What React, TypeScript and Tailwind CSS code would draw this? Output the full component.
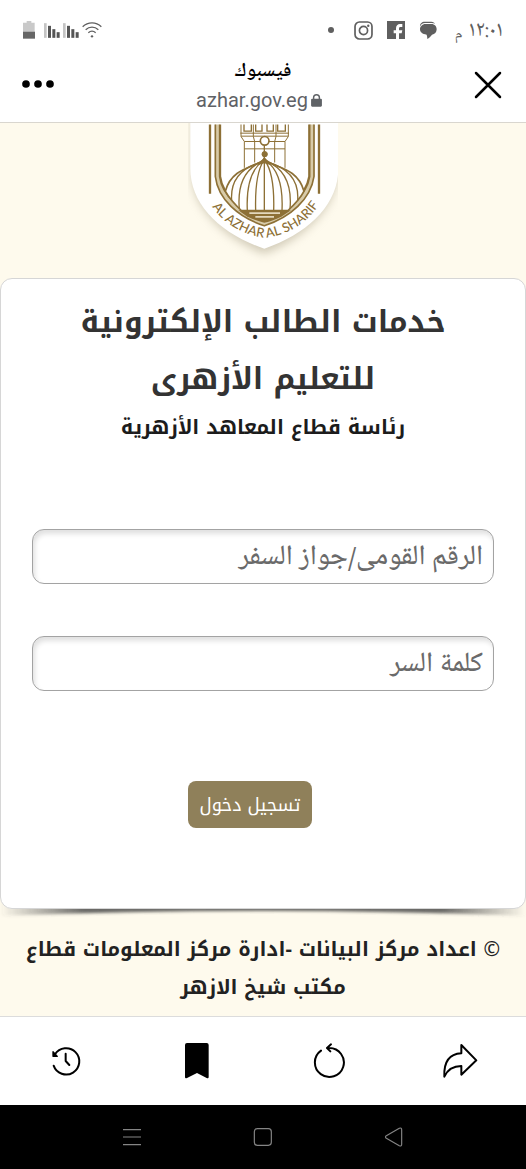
import React, { useState } from "react";

const SignalBars = () => (
  <svg viewBox="0 0 48 44" className="h-[15px] w-4" fill="#555" aria-hidden="true">
    <rect x="0" y="0" width="8" height="44" fill="#c4c4c4" />
    <rect x="12" y="8" width="9" height="36" />
    <rect x="25" y="18" width="9" height="26" />
    <rect x="38" y="27" width="9" height="17" />
  </svg>
);

const StatusBar = () => (
  <div className="flex h-14 items-center justify-between px-[23px] pt-1 text-[#5f5f5f]">
    <div className="flex items-center gap-[14px]">
      <span className="flex items-end gap-[6px] pe-1 font-['Noto_Naskh_Arabic_UI','Noto_Naskh_Arabic','DejaVu_Sans',sans-serif]">
        <span className="text-[22px] leading-6">١٢:٠١</span>
        <span className="text-base leading-4">م</span>
      </span>
      <svg viewBox="0 0 54 54" className="size-[18px]" fill="currentColor" aria-hidden="true">
        <path d="M3 17C2 8 9 2 17 2h20c6 0 9 3 11 6-3-1-6-2-10-2H18C10 6 6 10 3 17z" />
        <path d="M19 9h18c10 0 16 7 16 16s-6 15-14 16c-4 6-9 9-14 13 0-5-1-9-2-13C10 40 3 33 3 25S10 9 19 9z" />
      </svg>
      <svg viewBox="0 0 54 54" className="size-[18px]" aria-hidden="true">
        <rect width="54" height="54" fill="currentColor" />
        <path
          d="M46 9v9h-5c-4 0-5 2-5 5v5h10l-2 9h-8v17h-9V37h-7v-9h7v-6c0-8 5-13 12-13z"
          fill="#fff"
        />
      </svg>
      <svg viewBox="0 0 56 56" className="size-[19px]" fill="none" stroke="currentColor" aria-hidden="true">
        <rect x="3" y="3" width="50" height="50" rx="13" strokeWidth="5" />
        <circle cx="28" cy="28" r="12" strokeWidth="5" />
        <circle cx="42" cy="14" r="3.5" fill="currentColor" stroke="none" />
      </svg>
      <span className="mx-[6px] size-[6px] rounded-full bg-[#5f5f5f]" />
    </div>

    <div className="flex items-center gap-[3px]">
      <svg viewBox="0 0 60 48" className="h-4 w-5" fill="none" stroke="#5f5f5f" strokeWidth="4" aria-hidden="true">
        <path d="M2 14C18-1 42-1 58 14M11 23C22 13 38 13 49 23M19 32c7-6 15-6 22 0" />
        <circle cx="30" cy="43" r="3.5" fill="#5f5f5f" stroke="none" />
      </svg>
      <SignalBars />
      <SignalBars />
      <svg viewBox="0 0 36 54" className="ms-[6px] h-[18px] w-3" aria-hidden="true">
        <path d="M11 0h14v5h10v27H0V5h11z" fill="#c9c9c9" />
        <rect y="32" width="36" height="21" fill="#666" />
      </svg>
    </div>
  </div>
);

const BrowserHeader = () => (
  <header className="flex h-[67px] items-start justify-between border-b border-[#d9d6cf] px-[22px]">
    <button type="button" aria-label="إغلاق" className="mt-3 flex h-8 w-8 items-center justify-center">
      <svg viewBox="0 0 32 32" className="size-8" stroke="#000" strokeWidth="2.5" strokeLinecap="round">
        <path d="M4 5l24 24M28 5L4 29" />
      </svg>
    </button>
    <div className="flex flex-col items-center">
      <p className="font-['Noto_Naskh_Arabic_UI','Noto_Naskh_Arabic','DejaVu_Sans',sans-serif] text-xl leading-8 font-semibold text-black">
        فيسبوك
      </p>
      <p className="flex items-center gap-[3px] ps-2 font-[Roboto,sans-serif] text-xl leading-6 text-[#5f6266]">
        <svg viewBox="0 0 30 36" className="h-[13px] w-[11px]" aria-hidden="true">
          <rect y="13" width="30" height="22" rx="3" fill="currentColor" />
          <path d="M7 14v-4a8 8 0 0 1 16 0v4" fill="none" stroke="currentColor" strokeWidth="4" />
        </svg>
        <span dir="ltr">azhar.gov.eg</span>
      </p>
    </div>
    <button type="button" aria-label="المزيد" className="mt-3 flex h-8 w-8 items-center justify-center">
      <svg viewBox="0 0 96 24" className="h-[10px] w-8">
        <circle cx="12" cy="12" r="11.5" />
        <circle cx="48" cy="12" r="11.5" />
        <circle cx="84" cy="12" r="11.5" />
      </svg>
    </button>
  </header>
);

const AzharLogo = () => (
  <svg
    viewBox="54 24 450 456"
    className="w-[150px] overflow-hidden"
    direction="ltr"
    role="img"
    aria-label="Al Azhar Al Sharif"
  >
    <defs>
      <filter id="shieldShadow" x="-20%" y="-20%" width="140%" height="150%">
        <feGaussianBlur stdDeviation="14" />
      </filter>
      <path id="motto" d="M102 226C134 305 205 354 285 364C367 354 436 305 470 220" />
    </defs>
    <path
      d="M66 0V175C66 270 160 365 283 412C406 365 500 270 500 175V0z"
      fill="#a59c83"
      opacity=".5"
      filter="url(#shieldShadow)"
    />
    <path d="M61 0V155C61 265 150 350 283 397C416 350 505 265 505 155V0z" fill="#fff" />
    <g fill="none" stroke="#8d7036">
      <path d="M120 24V232M447 24V232" strokeWidth="7" />
      <path d="M143 24V178C150 242 208 294 283 320C358 294 416 242 425 178V24" stroke="#d8cba9" strokeWidth="15" />
      <path d="M136 24V180C144 248 204 302 283 328C362 302 422 248 432 180V24" strokeWidth="5" />
      <path d="M150 24V180C157 236 214 286 283 310C352 286 409 236 418 180V24" strokeWidth="7" />
    </g>
    <g fill="none" stroke="#8d7036" strokeWidth="3">
      <path d="M213 24V60L223 75V154M355 24V60L345 75V154" />
      <path d="M211 50H357M213 59H355M223 75H345M223 97H345" />
      <path d="M222 24V44H244V24M257 24V44H276V24M291 24V44H310V24M323 24V44H346V24" strokeWidth="4" />
      <path d="M250 24V60L254 75V138M318 24V60L314 75V138" />
      <path d="M283 84V282" strokeWidth="4" />
      <circle cx="284" cy="73" r="13" fill="#fff" strokeWidth="5" />
      <circle cx="284" cy="113" r="8" fill="#8d7036" />
    </g>
    <path
      d="M283 126C268 154 188 145 166 224C179 248 200 269 214 282H354C368 269 390 248 402 224C380 145 300 154 283 126z"
      fill="#fff"
      stroke="#8d7036"
      strokeWidth="5"
    />
    <g fill="none" stroke="#8d7036" strokeWidth="4">
      <path d="M283 128V282M281 132C260 165 255 215 257 282M285 132C308 165 313 215 311 282" />
      <path d="M280 132C240 160 229 220 232 282M287 132C328 160 339 220 336 282" />
      <path d="M278 134C220 158 202 210 208 278M289 134C348 158 366 210 360 278" />
      <path d="M276 136C206 156 181 198 185 252M291 136C362 156 387 198 383 252" />
    </g>
    <path d="M283 122l20 24-20-6-20 6z" fill="#8d7036" />
    <path d="M205 281H363L335 300C318 308 300 315 283 319C266 315 248 308 231 300z" fill="#8d7036" />
    <path d="M238 290H330M256 301H312" stroke="#e3d8bd" strokeWidth="5" />
    <text
      fill="#8d7036"
      fontSize="39"
      fontWeight="500"
      fontFamily="Lato, sans-serif"
      textAnchor="middle"
    >
      <textPath href="#motto" startOffset="50%">
        AL AZHAR AL SHARIF
      </textPath>
    </text>
  </svg>
);

const inputClass =
  "h-[55px] w-full rounded-xl border border-[#a3a3a3] bg-white px-[10px] font-['Noto_Naskh_Arabic_UI','Noto_Naskh_Arabic','DejaVu_Sans',sans-serif] text-[28px] font-medium text-[#333] shadow-[inset_2px_4px_5px_rgba(0,0,0,0.12)] placeholder:text-[#6a6a6a] focus:outline-none";

const LoginCard = () => {
  const [formData, setFormData] = useState({ nationalId: "", password: "" });

  const handleInputChange = (e: React.ChangeEvent<HTMLInputElement>) => {
    const { name, value } = e.target;
    setFormData((prev) => ({ ...prev, [name]: value }));
  };

  const handleSubmit = (e: React.FormEvent) => {
    e.preventDefault();
  };

  return (
    <section className="relative">
      {/* curved shadow under the card */}
      <svg
        viewBox="0 0 526 20"
        preserveAspectRatio="none"
        className="absolute -bottom-[12px] left-0 h-5 w-full"
        aria-hidden="true"
      >
        <defs>
          <linearGradient id="curlFade">
            <stop offset="0" stopColor="#444" stopOpacity="0" />
            <stop offset=".16" stopColor="#444" stopOpacity=".8" />
            <stop offset=".84" stopColor="#444" stopOpacity=".8" />
            <stop offset="1" stopColor="#444" stopOpacity="0" />
          </linearGradient>
          <filter id="curlBlur" x="-5%" y="-50%" width="110%" height="200%">
            <feGaussianBlur stdDeviation="1.5" />
          </filter>
        </defs>
        <path d="M0 0H526V15Q263 5 0 15z" fill="url(#curlFade)" filter="url(#curlBlur)" />
      </svg>

      <div className="relative rounded-xl border border-[#d6d6d6] bg-white px-[31px] pt-[15px] pb-20">
        <h1 className="text-center text-3xl leading-[57px] font-bold text-[#333]">
          خدمات الطالب الإلكترونية
          <br />
          للتعليم الأزهرى
        </h1>
        <h2 className="text-center text-xl leading-[38px] font-bold text-[#1c1c1c]">
          رئاسة قطاع المعاهد الأزهرية
        </h2>

        <form onSubmit={handleSubmit} className="mt-[83px]">
          <input
            name="nationalId"
            type="text"
            aria-label="الرقم القومى/جواز السفر"
            value={formData.nationalId}
            onChange={handleInputChange}
            placeholder="الرقم القومى/جواز السفر"
            className={inputClass}
          />
          <input
            name="password"
            type="password"
            aria-label="كلمة السر"
            value={formData.password}
            onChange={handleInputChange}
            placeholder="كلمة السر"
            className={`mt-[52px] ${inputClass}`}
          />
          <div className="mt-[90px] flex justify-center ps-[26px]">
            <button
              type="submit"
              className="h-[47px] rounded-lg bg-[#8f805a] px-[11px] text-lg text-white"
            >
              تسجيل دخول
            </button>
          </div>
        </form>
      </div>
    </section>
  );
};

const BrowserToolbar = () => (
  <nav className="grid h-[89px] grid-cols-4 place-items-center border-t border-[#dcdcdc] bg-white">
    <button type="button" aria-label="مشاركة">
      <svg viewBox="538 99 108 108" className="size-9" fill="none" stroke="#000" strokeWidth="6" strokeLinejoin="round">
        <path d="M596 105L641 151L596 194V168C571 168 555 178 545 200C543 157 559 132 596 130z" />
      </svg>
    </button>
    <button type="button" aria-label="تحديث">
      <svg viewBox="143 99 108 108" className="size-9" fill="none" stroke="#000" strokeWidth="6" strokeLinecap="round" strokeLinejoin="round">
        <path d="M173 122A43.500 43.500 0 1 0 198 114H192M203 103L191 114L201 124" />
      </svg>
    </button>
    <button type="button" aria-label="الإشارات المرجعية">
      <svg viewBox="538 99 108 108" className="size-9">
        <path d="M562 99H621Q627 99 627 105V201Q627 207 621 204L592 189L562 204Q556 207 556 201V105Q556 99 562 99z" />
      </svg>
    </button>
    <button type="button" aria-label="السجل">
      <svg viewBox="143 99 108 108" className="size-9" fill="none" stroke="#000" strokeWidth="6" strokeLinecap="round" strokeLinejoin="round">
        <path d="M160 167A39.500 39.500 0 1 0 164 133M196 131V153L207 165" />
        <path d="M158 125V139H171z" fill="#000" strokeWidth="4" />
      </svg>
    </button>
  </nav>
);

const SystemNav = () => (
  <nav className="grid h-16 grow grid-cols-3 place-items-center bg-black px-[66px]">
    <button type="button" aria-label="رجوع">
      <svg viewBox="0 0 60 60" className="size-5" fill="none" stroke="#858585" strokeWidth="3.500" strokeLinejoin="round">
        <path d="M46 4Q53 1 53 8V52Q53 59 46 56L7 34Q2 30 7 26z" />
      </svg>
    </button>
    <button type="button" aria-label="الرئيسية">
      <svg viewBox="0 0 60 60" className="size-5" fill="none" stroke="#858585" strokeWidth="3.500">
        <rect x="4" y="5" width="51" height="50" rx="9" />
      </svg>
    </button>
    <button type="button" aria-label="التطبيقات">
      <svg viewBox="0 0 60 60" className="size-5" stroke="#858585" strokeWidth="3.500">
        <path d="M3 8H57M3 30H57M3 53H57" />
      </svg>
    </button>
  </nav>
);

const App = () => {
  return (
    <div
      dir="rtl"
      lang="ar"
      className="flex min-h-screen flex-col bg-white font-['Noto_Kufi_Arabic','Noto_Sans_Arabic','DejaVu_Sans',sans-serif]"
    >
      <StatusBar />
      <BrowserHeader />
      <main className="bg-[#fefaed]">
        <div className="flex h-[155px] justify-center">
          <AzharLogo />
        </div>
        <LoginCard />
        <footer className="px-5 pt-[21px] pb-[10px] text-center text-xl leading-[38px] font-bold text-[#222]">
          <span className="font-normal">©</span> اعداد مركز البيانات -ادارة مركز المعلومات قطاع مكتب شيخ الازهر
        </footer>
      </main>
      <BrowserToolbar />
      <SystemNav />
    </div>
  );
};

export default App;
